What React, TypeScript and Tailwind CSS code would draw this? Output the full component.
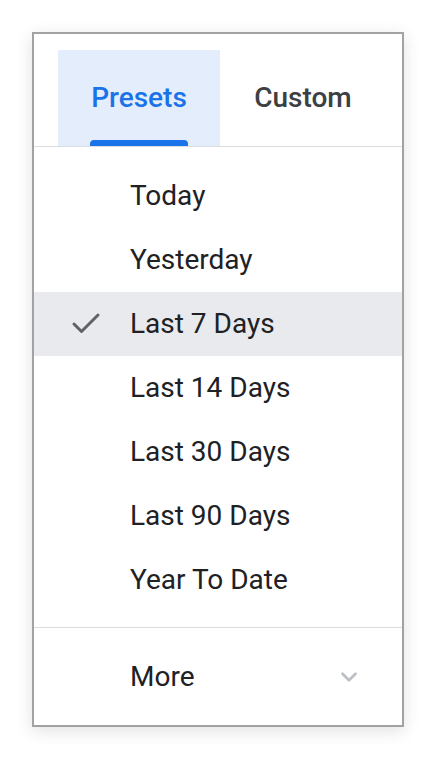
import { Check, ChevronDown } from "lucide-react";

const presets = [
  "Today",
  "Yesterday",
  "Last 7 Days",
  "Last 14 Days",
  "Last 30 Days",
  "Last 90 Days",
  "Year To Date",
];

export default function App() {
  const selected = "Last 7 Days";

  return (
    <div className="min-h-[760px] bg-white pt-8 pl-8 font-['Roboto',sans-serif]">
      <div className="w-[372px] h-[695px] border-2 border-[#a2a2a2] bg-white shadow-[0_4px_16px_rgba(0,0,0,0.12)] flex flex-col">
        <div className="flex pt-4 pl-6 border-b border-[#dadce0]">
          <div className="relative w-[162px] h-[96px] bg-[#e3edfc] flex items-center justify-center">
            <span className="text-[28px] font-medium text-[#1a73e8]">Presets</span>
            <span className="absolute bottom-0 left-[32px] w-[98px] h-[6px] rounded-t-[4px] bg-[#1a73e8]" />
          </div>
          <div className="w-[166px] h-[96px] flex items-center justify-center">
            <span className="text-[28px] font-medium text-[#3c4043]">Custom</span>
          </div>
        </div>

        <ul className="pt-[17px] pb-[15px] border-b border-[#dadce0]">
          {presets.map((p) => (
            <li
              key={p}
              className={`h-[64px] flex items-center ${p === selected ? "bg-[#e8eaed]" : ""}`}
            >
              <span className="w-[96px] flex justify-end pr-[26px]">
                {p === selected && (
                  <Check className="w-[36px] h-[36px] text-[#5f6368]" strokeWidth={2} />
                )}
              </span>
              <span className="text-[28px] text-[#202124]">{p}</span>
            </li>
          ))}
        </ul>

        <div className="flex-1 flex items-center pl-[96px] pr-[40px]">
          <span className="flex-1 text-[28px] text-[#202124]">More</span>
          <ChevronDown className="w-[26px] h-[26px] text-[#bdc1c6]" strokeWidth={2.5} />
        </div>
      </div>
    </div>
  );
}
